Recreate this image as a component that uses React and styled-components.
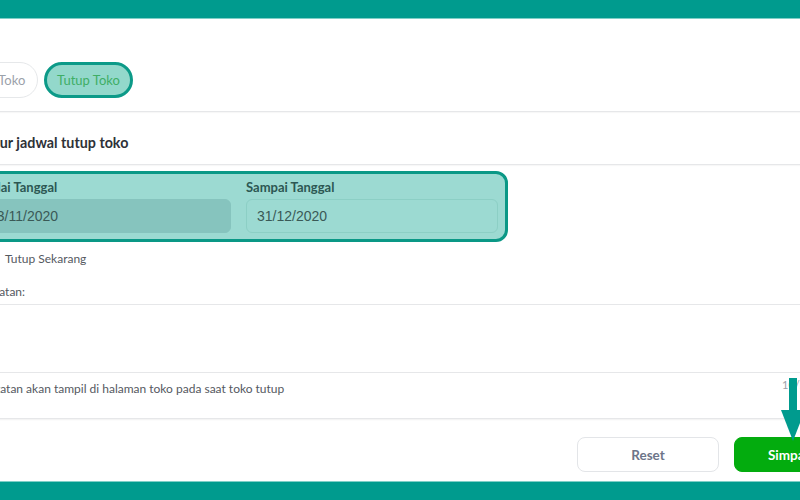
import React from 'react';
import styled, { createGlobalStyle } from 'styled-components';

const GlobalStyle = createGlobalStyle`
  html, body {
    margin: 0;
    padding: 0;
    background: #ffffff;
    font-family: Lato, "Open Sans", sans-serif;
  }
  #root {
    width: 800px;
    height: 500px;
    overflow: hidden;
  }
`;

const Frame = styled.div`
  position: relative;
  width: 800px;
  height: 500px;
  display: flex;
  flex-direction: column;
  overflow: hidden;
`;

const Bar = styled.div`
  flex: none;
  height: ${p => p.h}px;
  background: #009b8e;
  border-${p => p.edge}: 1px solid #7fcfc7;
`;

const Main = styled.div`
  flex: 1;
  overflow: hidden;
`;

// page is scrolled sideways in the screenshot, so it starts left of the viewport
const Page = styled.div`
  margin-left: -46px;
  width: 940px;
`;

const TabRow = styled.div`
  display: flex;
  gap: 6px;
  padding: 43px 0 13px;
`;

const Tab = styled.div`
  box-sizing: border-box;
  width: ${p => p.w}px;
  height: 36px;
  border-radius: 18px;
  display: flex;
  align-items: center;
  justify-content: center;
  font-size: 13px;
  color: ${p => (p.active ? '#3fae66' : '#9ba1aa')};
  background: ${p => (p.active ? '#93d8cb' : '#ffffff')};
  border: ${p => (p.active ? '3px solid #0c9a88' : '1.5px solid #e6e8ea')};
`;

const Divider = styled.div`
  height: 1px;
  background: #e6e7e9;
  box-shadow: 0 1px 1px rgba(0, 0, 0, 0.04);
`;

const Heading = styled.h2`
  margin: 0;
  padding: 22px 0 13px 31px;
  font-size: 14.3px;
  line-height: 17px;
  font-weight: 700;
  color: #2e3137;
`;

const DateBox = styled.div`
  box-sizing: border-box;
  margin: 6px 0 0 14px;
  width: 540px;
  padding: 5px 7px 6px 7px;
  border: 3px solid #0a9886;
  border-radius: 12px;
  background: #9cdad2;
  display: grid;
  grid-template-columns: 253px 252px;
  column-gap: 15px;
`;

const Field = styled.div`
  display: flex;
  flex-direction: column;
  gap: 4px;
`;

const FieldLabel = styled.label`
  font-size: 13px;
  line-height: 16px;
  font-weight: 700;
  color: #2c5753;
`;

const DateInput = styled.div`
  box-sizing: border-box;
  height: 34px;
  border-radius: 6px;
  padding-left: 10px;
  display: flex;
  align-items: center;
  font-family: "Liberation Sans", Arial, sans-serif;
  font-size: 14px;
  color: #3a5956;
  background: ${p => (p.disabled ? '#86c4be' : 'transparent')};
  border: 1px solid ${p => (p.disabled ? '#86c4be' : '#8ccfc5')};
`;

const CheckRow = styled.label`
  display: flex;
  align-items: center;
  gap: 9px;
  margin: 8px 0 0 24px;
  height: 16px;
  font-size: 12px;
  color: #55595f;
`;

const Check = styled.span`
  box-sizing: border-box;
  width: 18px;
  height: 16px;
  border: 1.5px solid #c9ced4;
  border-radius: 3px;
`;

const NoteLabel = styled.div`
  margin: 18px 0 0 27px;
  font-size: 12px;
  line-height: 16px;
  color: #55595f;
`;

const NoteBox = styled.div`
  margin: 4px 0 0 12px;
  border: 1px solid #e6e7e9;
  border-right: none;
  border-radius: 6px 0 0 6px;
  box-shadow: 0 1px 2px rgba(0, 0, 0, 0.06);
`;

const NoteArea = styled.div`
  height: 67px;
  border-bottom: 1px solid #e6e7e9;
`;

const NoteFoot = styled.div`
  height: 45px;
  display: flex;
  justify-content: space-between;
  align-items: flex-start;
  padding: 8px 0 0 15px;
  box-sizing: border-box;
  font-size: 12px;
  color: #55595f;
`;

const Counter = styled.span`
  width: 112px;
  margin-top: -3px;
  font-size: 11px;
  color: #9ba1aa;
`;

const Actions = styled.div`
  display: flex;
  gap: 15px;
  margin: 18px 0 0 623px;
`;

const Button = styled.button`
  box-sizing: border-box;
  width: ${p => p.w}px;
  height: 35px;
  padding: 0;
  border-radius: 8px;
  font-family: Lato, "Open Sans", sans-serif;
  font-size: 13.5px;
  font-weight: 700;
  color: ${p => (p.primary ? '#ffffff' : '#6d7588')};
  background: ${p => (p.primary ? '#03ac0e' : '#ffffff')};
  border: ${p => (p.primary ? '1px solid #03ac0e' : '1.5px solid #e3e5e8')};
`;

const Arrow = styled.svg`
  position: absolute;
  left: 781px;
  top: 378px;
`;

export default function App() {
  return (
    <Frame>
      <GlobalStyle />
      <Bar h={18} edge="bottom" />
      <Main>
        <Page>
          <TabRow>
            <Tab w={84}>Buka Toko</Tab>
            <Tab w={89} active>Tutup Toko</Tab>
          </TabRow>
          <Divider />
          <Heading>Atur jadwal tutup toko</Heading>
          <Divider />
          <DateBox>
            <Field>
              <FieldLabel>Mulai Tanggal</FieldLabel>
              <DateInput disabled>13/11/2020</DateInput>
            </Field>
            <Field>
              <FieldLabel>Sampai Tanggal</FieldLabel>
              <DateInput>31/12/2020</DateInput>
            </Field>
          </DateBox>
          <CheckRow>
            <Check />
            Tutup Sekarang
          </CheckRow>
          <NoteLabel>Catatan:</NoteLabel>
          <NoteBox>
            <NoteArea />
            <NoteFoot>
              <span>Catatan akan tampil di halaman toko pada saat toko tutup</span>
              <Counter>10/250</Counter>
            </NoteFoot>
          </NoteBox>
          <Actions>
            <Button w={142}>Reset</Button>
            <Button w={112} primary>Simpan</Button>
          </Actions>
        </Page>
      </Main>
      <Bar h={18} edge="top" />
      <Arrow width="24" height="63" viewBox="0 0 24 63">
        <rect x="8" y="0" width="8" height="36" fill="#009b8e" />
        <polygon points="0,32 24,32 12,63" fill="#009b8e" />
      </Arrow>
    </Frame>
  );
}
